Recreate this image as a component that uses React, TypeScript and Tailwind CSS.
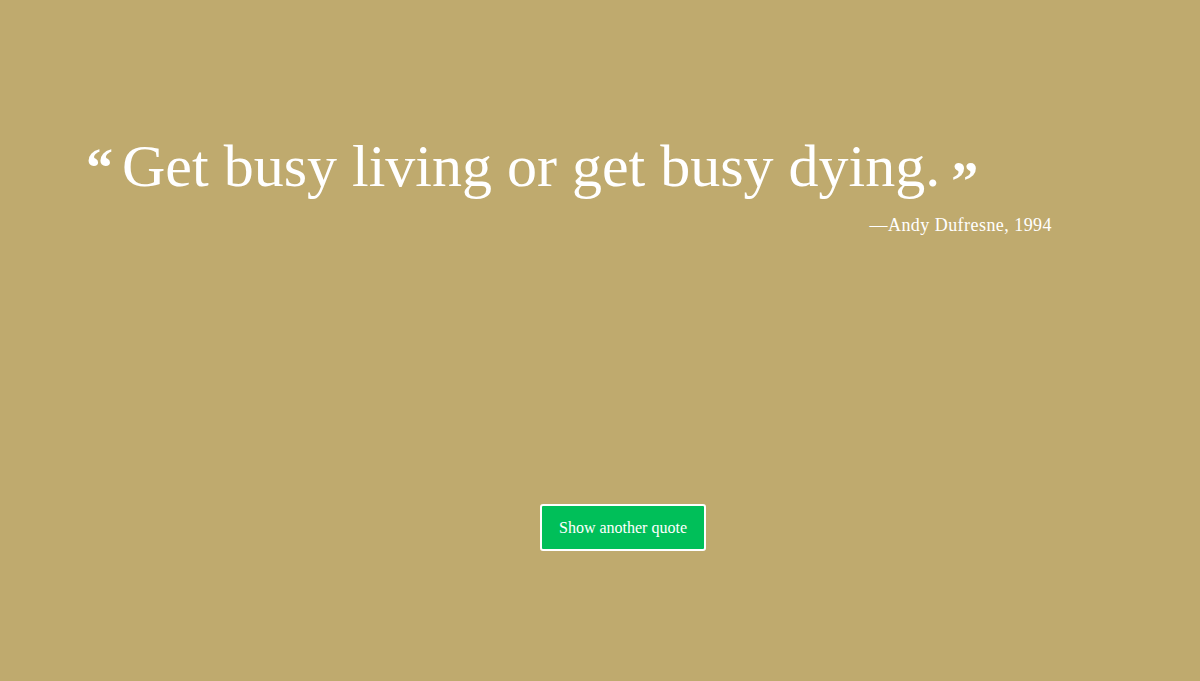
export default function App() {
  return (
    <div
      className="w-full h-[681px] bg-[#bfaa6e] text-white flex flex-col"
      style={{ fontFamily: '"Liberation Serif", "DejaVu Serif", serif' }}
    >
      <div className="pt-[128px] pl-[86px] pr-[148px]">
        <blockquote className="flex items-start">
          <span className="text-[54px] font-bold leading-none mt-[13px] mr-[9px]">&ldquo;</span>
          <span className="text-[60px] leading-[76px]">Get busy living or get busy dying.</span>
          <span className="text-[54px] font-bold leading-none mt-[26px] ml-[11px]">&rdquo;</span>
        </blockquote>
        <p className="text-right text-[18px] mt-[4px] tracking-wide">&mdash;Andy Dufresne, 1994</p>
      </div>
      <div className="flex justify-center mt-[265px]">
        <button className="h-[47px] w-[166px] bg-[#00bf59] border-2 border-white rounded-[3px] text-[16px] text-white ml-[46px]">
          Show another quote
        </button>
      </div>
    </div>
  );
}
